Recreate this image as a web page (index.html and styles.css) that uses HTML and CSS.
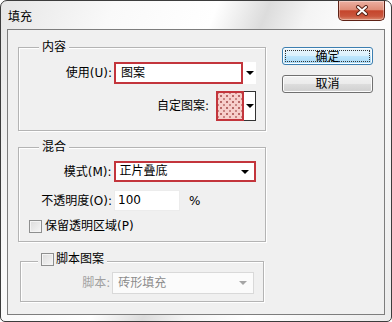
FILE: index.html
```html
<!DOCTYPE html>
<html lang="zh-CN">
<head>
    <meta charset="UTF-8">
    <title>填充</title>
    <link rel="stylesheet" href="styles.css">
</head>
<body>
    <div class="window">
        <div class="titlebar">
            <span class="title">填充</span>
            <button class="close" aria-label="关闭">
                <svg width="14" height="11" viewBox="0 0 14 11">
                    <path d="M3 2 L11 9 M11 2 L3 9" stroke="#5a2418" stroke-width="4" stroke-linecap="round"/>
                    <path d="M3 2 L11 9 M11 2 L3 9" stroke="#fff" stroke-width="2" stroke-linecap="round"/>
                </svg>
            </button>
        </div>
        <div class="client">
            <div class="groups">
                <div class="group">
                    <div class="group-title">内容</div>
                    <div class="row">
                        <label class="label">使用(U):</label>
                        <div class="select select-use">
                            <span class="select-value">图案</span>
                            <span class="select-arrow"></span>
                        </div>
                    </div>
                    <div class="row row-pattern">
                        <label class="label-inline">自定图案:</label>
                        <div class="pattern-picker">
                            <span class="swatch"></span>
                            <span class="select-arrow"></span>
                        </div>
                    </div>
                </div>

                <div class="group group-blend">
                    <div class="group-title">混合</div>
                    <div class="row">
                        <label class="label">模式(M):</label>
                        <div class="select select-mode">
                            <span class="select-value">正片叠底</span>
                            <span class="select-arrow"></span>
                        </div>
                    </div>
                    <div class="row row-opacity">
                        <label class="label">不透明度(O):</label>
                        <span class="input">100</span>
                        <span class="unit">%</span>
                    </div>
                    <div class="row row-check">
                        <span class="checkbox"></span>
                        <span>保留透明区域(P)</span>
                    </div>
                </div>

                <div class="group group-script">
                    <div class="group-title group-title-check">
                        <span class="checkbox"></span>
                        <span>脚本图案</span>
                    </div>
                    <div class="row">
                        <label class="label label-disabled">脚本:</label>
                        <div class="select select-disabled">
                            <span class="select-value">砖形填充</span>
                            <span class="select-arrow"></span>
                        </div>
                    </div>
                </div>
            </div>

            <div class="actions">
                <button class="btn btn-default"><span class="focus">确定</span></button>
                <button class="btn">取消</button>
            </div>
        </div>
    </div>
</body>
</html>
```

FILE: styles.css
```css
* { box-sizing: border-box; }
body { margin: 0; background: #fff; font: 12px/14px "DejaVu Sans", "Noto Sans CJK SC", sans-serif; color: #000; }

.window { width: 392px; height: 322px; border: 1px solid #3c3c3c; border-radius: 7px 7px 5px 5px; padding: 0 6px 6px; display: flex; flex-direction: column;
    background: linear-gradient(112deg, #e6e6e6 0%, #f9f9f9 22%, #ffffff 42%, #dcdcdc 52%, #f4f4f4 60%, #ffffff 72%, #ebebeb 100%); }

.titlebar { height: 28px; display: flex; justify-content: space-between; align-items: flex-start; }
.title { margin: 9px 0 0 1px; font-size: 12px; }
.close { width: 47px; height: 20px; padding: 0; border: 1px solid #5e2216; border-top: none; border-radius: 0 0 5px 5px; display: flex; align-items: center; justify-content: center;
    background: linear-gradient(#ecb0a2 0%, #df8d78 45%, #c5452c 52%, #c9553c 80%, #dc8b70 100%); box-shadow: inset 0 0 0 1px rgba(255,255,255,0.35); }

.client { flex: 1; display: flex; background: #f0f0f0; border: 1px solid #7d7d7d; }

.groups { width: 258px; padding-left: 10px; }
.group { position: relative; width: 248px; height: 84px; margin-top: 17px; padding: 14px 9px 0 0; border: 1px solid #b4b4b4; box-shadow: inset 1px 1px 0 #fff, 1px 1px 0 #fff; }
.group-blend { height: 95px; margin-top: 16px; padding-top: 13px; }
.group-script { width: 244px; height: 41px; margin: 19px 0 0 2px; padding-top: 10px; }
.group-title { position: absolute; top: -8px; left: 20px; padding: 0 3px; background: #f0f0f0; line-height: 14px; display: flex; align-items: center; gap: 2px; }
.group-title-check { top: -10px; left: 17px; }

.row { display: flex; align-items: center; }
.label { width: 93px; margin-right: 2px; text-align: right; white-space: nowrap; }
.label-disabled { width: 90px; color: #a0a0a0; }

.select { display: flex; width: 142px; height: 22px; background: #fff; }
.select-value { flex: 1; padding-left: 5px; line-height: 18px; border: 2px solid #c3353c; }
.select-arrow { width: 13px; position: relative; background: #fff; }
.select-arrow::after { content: ""; position: absolute; left: 3px; top: 50%; margin-top: -2px; border: 4px solid transparent; border-top: 4px solid #000; border-bottom: none; width: 0; height: 0; }

.select-mode { width: 143px; height: 21px; border: 2px solid #c3353c; }
.select-mode .select-value { border: none; line-height: 17px; padding-left: 4px; }
.select-mode .select-arrow { width: 16px; }

.select-disabled { width: 143px; border: 1px solid #d9d9d9; background: #fbfbfb; color: #8c8c8c; }
.select-disabled .select-value { border: none; line-height: 20px; padding-left: 5px; }
.select-disabled .select-arrow { width: 20px; background: transparent; }
.select-disabled .select-arrow::after { left: 6px; border-top-color: #a5a5a5; }

.row-pattern { justify-content: flex-end; margin-top: 7px; }
.label-inline { margin-right: 7px; }
.pattern-picker { display: flex; height: 30px; }
.swatch { width: 28px; border: 2px solid #c3353c; background-color: #f7cfcb;
    background-image: radial-gradient(circle, #b86a68 0.9px, transparent 1.3px), radial-gradient(circle, #c98582 0.9px, transparent 1.3px);
    background-size: 6px 6px, 6px 6px; background-position: 0 0, 3px 3px; }
.pattern-picker .select-arrow { width: 12px; border: 1px solid #333; border-left: none; }
.pattern-picker .select-arrow::after { left: 2px; }

.row-opacity { margin-top: 8px; }
.input { width: 66px; height: 21px; padding-left: 3px; line-height: 19px; background: #fff; border: 1px solid #ececec; margin-left: 0; }
.unit { margin-left: 9px; }

.row-check { margin-top: 8px; padding-left: 10px; gap: 3px; }
.checkbox { display: inline-block; width: 13px; height: 13px; border: 1px solid #8e8f8f; background: linear-gradient(135deg, #dcdcdc, #f6f6f6); box-shadow: inset 0 0 0 1px #f4f4f4; }

.actions { display: flex; flex-direction: column; gap: 10px; margin: 17px 0 0 16px; }
.btn { width: 91px; height: 18px; padding: 0; font: inherit; border: 1px solid #707070; border-radius: 3px; background: linear-gradient(#f2f2f2 0%, #ebebeb 49%, #dddddd 50%, #cfcfcf 100%); box-shadow: inset 0 0 0 1px #fcfcfc; }
.btn-default { border-color: #3c7fb1; background: linear-gradient(#eaf6fd 0%, #d9f0fc 49%, #bee6fd 50%, #a7d9f5 100%); padding: 2px; }
.focus { display: block; height: 100%; line-height: 12px; border: 1px dotted #333; }
```
